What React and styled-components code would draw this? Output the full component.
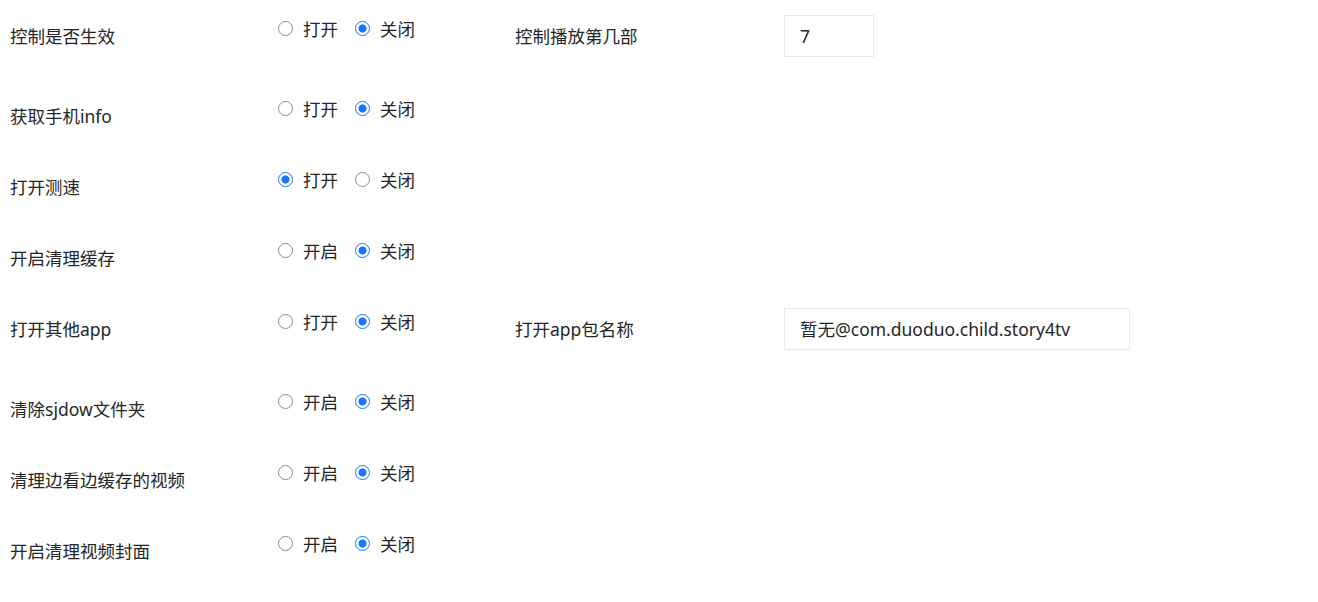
import React, { useState } from 'react';
import styled, { createGlobalStyle } from 'styled-components';

const GlobalStyle = createGlobalStyle`
  body {
    margin: 0;
    background: #fff;
    font-family: "Noto Sans", "Noto Sans CJK SC", sans-serif;
    color: #262626;
  }
`;

const Form = styled.div`
  padding: 0 10px;
  display: flex;
  flex-direction: column;
`;

const Row = styled.div`
  display: grid;
  grid-template-columns: 268px 237px 269px auto;
  align-items: center;
  height: 71px;
  margin-bottom: ${(p) => (p.$spaced ? '9px' : '0')};
`;

const Label = styled.div`
  font-size: 17.5px;
  line-height: 24px;
  white-space: nowrap;
`;

const RadioGroup = styled.div`
  display: flex;
  align-items: center;
  padding-bottom: 14px;
`;

const RadioOption = styled.label`
  display: flex;
  align-items: center;
  margin-right: 17px;
  font-size: 17.5px;
  line-height: 22px;
  cursor: pointer;
`;

const RadioDot = styled.input.attrs({ type: 'radio' })`
  appearance: none;
  margin: 0 10px 0 0;
  width: 15px;
  height: 15px;
  border-radius: 50%;
  border: 1px solid ${(p) => (p.checked ? '#1677ff' : '#8c8c8c')};
  box-sizing: border-box;
  background: ${(p) => (p.checked ? 'radial-gradient(circle, #1677ff 0 3.8px, #fff 4.3px)' : '#fff')};
  cursor: pointer;
`;

const TextInput = styled.input`
  box-sizing: border-box;
  width: ${(p) => p.$width}px;
  height: 42px;
  border: 1px solid #e8e8e8;
  padding: 0 15px;
  font-family: "Noto Sans", "Noto Sans CJK SC", sans-serif;
  font-size: 17.5px;
  color: #262626;
  outline: none;
`;

const rows = [
  { label: '控制是否生效', on: '打开', value: 'off', side: { label: '控制播放第几部', value: '7', width: 90 } },
  { label: '获取手机info', on: '打开', value: 'off' },
  { label: '打开测速', on: '打开', value: 'on' },
  { label: '开启清理缓存', on: '开启', value: 'off' },
  { label: '打开其他app', on: '打开', value: 'off', side: { label: '打开app包名称', value: '暂无@com.duoduo.child.story4tv', width: 346 } },
  { label: '清除sjdow文件夹', on: '开启', value: 'off' },
  { label: '清理边看边缓存的视频', on: '开启', value: 'off' },
  { label: '开启清理视频封面', on: '开启', value: 'off' },
];

const SettingRow = ({ item, index }) => {
  const [value, setValue] = useState(item.value);
  const [text, setText] = useState(item.side ? item.side.value : '');
  const name = `setting-${index}`;
  return (
    <Row $spaced={!!item.side}>
      <Label>{item.label}</Label>
      <RadioGroup>
        <RadioOption>
          <RadioDot name={name} checked={value === 'on'} onChange={() => setValue('on')} />
          {item.on}
        </RadioOption>
        <RadioOption>
          <RadioDot name={name} checked={value === 'off'} onChange={() => setValue('off')} />
          关闭
        </RadioOption>
      </RadioGroup>
      {item.side && (
        <>
          <Label>{item.side.label}</Label>
          <TextInput $width={item.side.width} value={text} onChange={(e) => setText(e.target.value)} />
        </>
      )}
    </Row>
  );
};

export default function App() {
  return (
    <>
      <GlobalStyle />
      <Form>
        {rows.map((item, i) => (
          <SettingRow key={item.label} item={item} index={i} />
        ))}
      </Form>
    </>
  );
}
